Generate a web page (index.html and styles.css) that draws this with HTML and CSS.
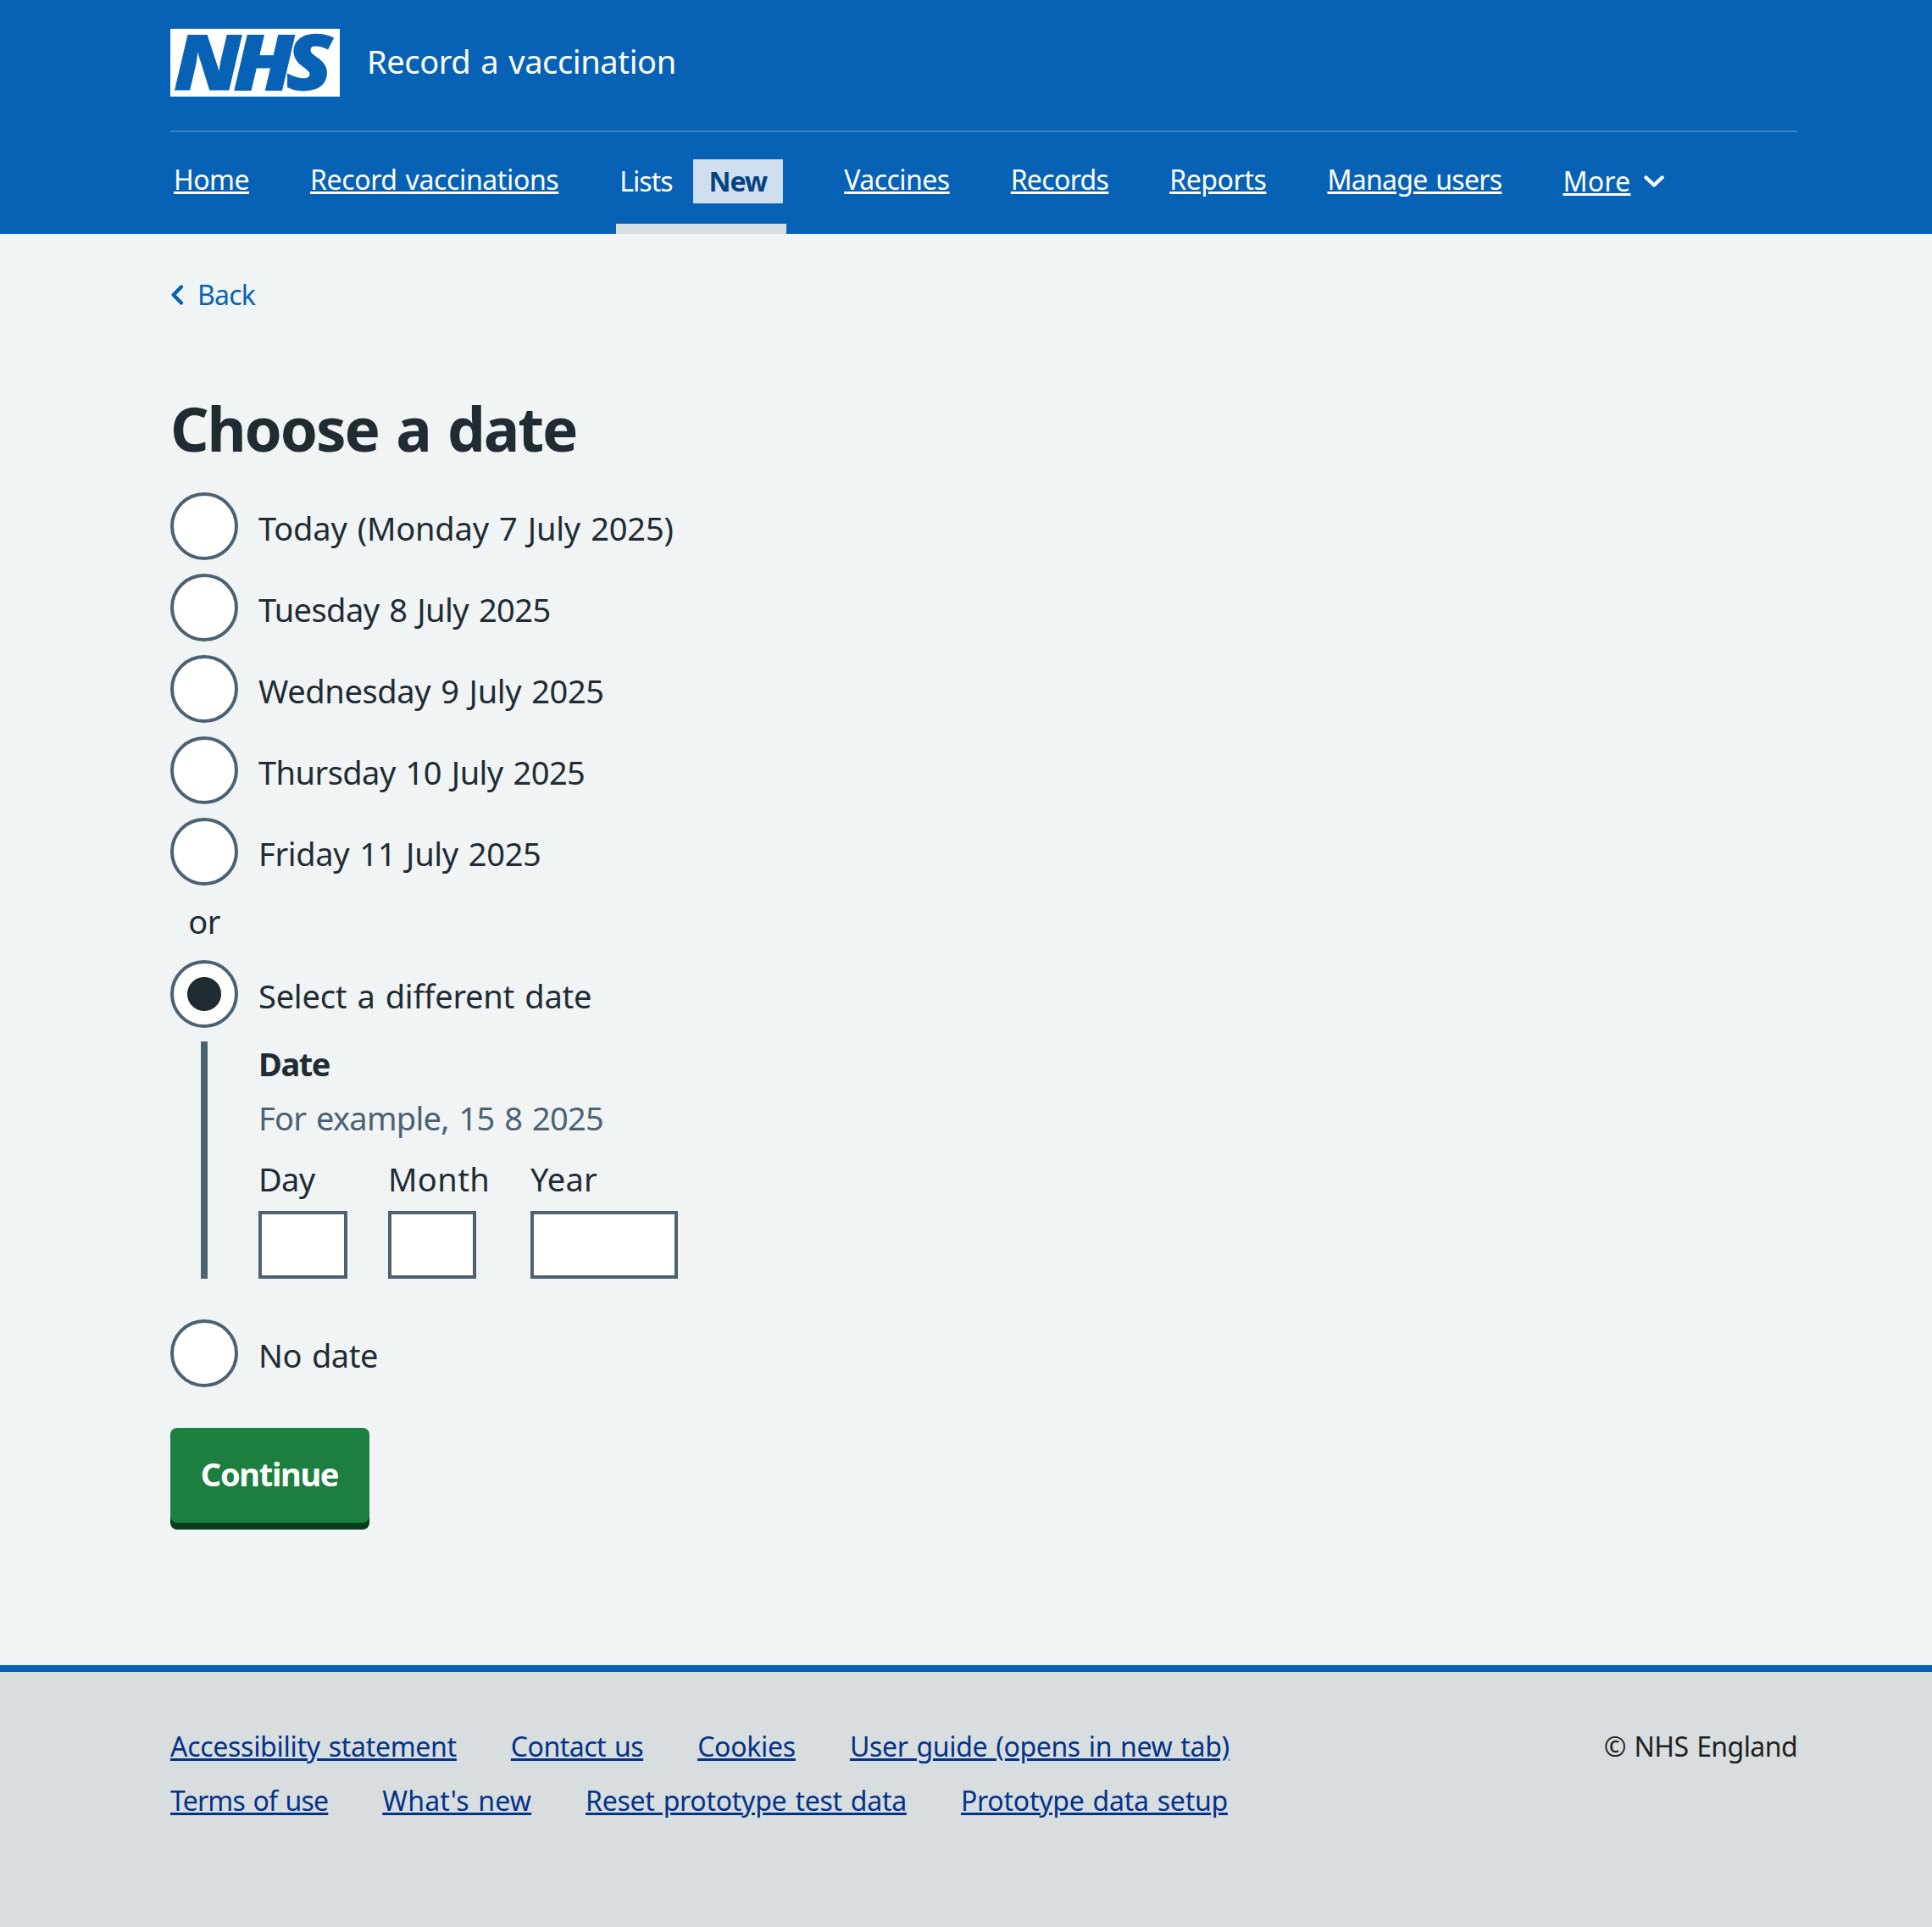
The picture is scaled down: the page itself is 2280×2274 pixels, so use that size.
FILE: index.html
```
<!DOCTYPE html>
<html lang="en">
<head>
<meta charset="utf-8">
<title>Choose a date - Record a vaccination</title>
<link rel="stylesheet" href="styles.css">
</head>
<body>
<header class="header">
  <div class="container">
    <div class="header-top">
      <svg class="logo" viewBox="0 0 200 80" role="img" aria-label="NHS">
        <rect width="200" height="80" fill="#fff"/>
        <text class="logo-text" transform="scale(1.11 1)" x="3.6 66.8 122.8" y="72.3">NHS</text>
      </svg>
      <span class="service-name">Record a vaccination</span>
    </div>
    <nav>
      <ul class="nav">
        <li><a class="nav-link nav-home" href="#">Home</a></li>
        <li><a class="nav-link nav-record" href="#">Record vaccinations</a></li>
        <li class="nav-current"><a class="nav-lists" href="#">Lists</a><strong class="tag">New</strong></li>
        <li><a class="nav-link nav-vaccines" href="#">Vaccines</a></li>
        <li><a class="nav-link nav-records" href="#">Records</a></li>
        <li><a class="nav-link nav-reports" href="#">Reports</a></li>
        <li><a class="nav-link nav-users" href="#">Manage users</a></li>
        <li class="nav-more"><a class="nav-link" href="#">More</a><svg class="chevron" viewBox="0 0 24 14"><path d="M2.5 2.5 12 11.5 21.5 2.5"/></svg></li>
      </ul>
    </nav>
  </div>
</header>

<main class="main container">
  <a class="back" href="#"><svg class="back-icon" viewBox="0 0 14 24"><path d="M12 2.5 2.7 12 12 21.5"/></svg>Back</a>
  <h1>Choose a date</h1>
  <form>
    <div class="radios">
      <label class="radio"><span class="dot"></span><span class="label-today">Today (Monday 7 July 2025)</span></label>
      <label class="radio"><span class="dot"></span><span class="label-tue">Tuesday 8 July 2025</span></label>
      <label class="radio"><span class="dot"></span><span class="label-wed">Wednesday 9 July 2025</span></label>
      <label class="radio"><span class="dot"></span><span class="label-thu">Thursday 10 July 2025</span></label>
      <label class="radio"><span class="dot"></span><span class="label-fri">Friday 11 July 2025</span></label>
    </div>
    <div class="divider">or</div>
    <label class="radio"><span class="dot dot-on"></span><span class="label-select">Select a different date</span></label>
    <fieldset class="conditional">
      <div class="legend">Date</div>
      <div class="hint">For example, 15 8 2025</div>
      <div class="date">
        <label class="day">Day<input type="text"></label>
        <label class="month">Month<input type="text"></label>
        <label class="year">Year<input type="text"></label>
      </div>
    </fieldset>
    <label class="radio"><span class="dot"></span><span class="label-none">No date</span></label>
    <button class="button" type="button">Continue</button>
  </form>
</main>

<footer class="footer">
  <div class="container footer-row">
    <ul class="footer-links">
      <li><a class="f-access" href="#">Accessibility statement</a></li>
      <li><a class="f-contact" href="#">Contact us</a></li>
      <li><a class="f-cookies" href="#">Cookies</a></li>
      <li><a class="f-guide" href="#">User guide (opens in new tab)</a></li>
      <li><a class="f-terms" href="#">Terms of use</a></li>
      <li><a class="f-news" href="#">What's new</a></li>
      <li><a class="f-reset" href="#">Reset prototype test data</a></li>
      <li><a class="f-setup" href="#">Prototype data setup</a></li>
    </ul>
    <p class="copyright">© NHS England</p>
  </div>
</footer>
</body>
</html>
```
FILE: styles.css
```
* { box-sizing: border-box; }

body {
  margin: 0;
  background: #f0f4f5;
  color: #212b32;
  font: 38px/56px "Noto Sans", "Open Sans", sans-serif;
  word-spacing: 2.5px;
}

ul { list-style: none; margin: 0; padding: 0; }

a {
  color: inherit;
  text-decoration-thickness: 3px;
  text-underline-offset: 2px;
}

.container { width: 1920px; margin-left: 201px; }

/* Header */
.header { height: 276px; background: #0762b6; color: #fff; }
.header-top {
  display: flex;
  align-items: center;
  gap: 32px;
  height: 156px;
  padding: 34px 0 40px;
  border-bottom: 2px solid #3981c5;
}
.logo { display: block; width: 200px; height: 80px; overflow: visible; }
.logo-text {
  fill: #0762b6;
  stroke: #0762b6;
  stroke-width: 0.8;
  font: italic 900 91px "Noto Sans", sans-serif;
}
.service-name { padding-bottom: 4px; letter-spacing: -0.38px; }

.nav { display: flex; gap: 64px; height: 120px; font-size: 32px; word-spacing: 2px; }
.nav li { padding: 28px 4px 0; }
.nav-link { display: block; }
.nav-home { letter-spacing: -0.51px; }
.nav-record { letter-spacing: -0.38px; }
.nav-vaccines { letter-spacing: -0.53px; }
.nav-records { letter-spacing: -0.67px; }
.nav-reports { letter-spacing: -0.41px; }
.nav-users { letter-spacing: -0.71px; }
.nav .nav-current {
  display: flex;
  justify-content: space-between;
  width: 201px;
  padding-top: 30px;
  border-bottom: 12px solid #d8dde0;
}
.nav-lists { text-decoration: none; letter-spacing: -0.95px; }
.tag {
  width: 106px;
  height: 52px;
  margin-top: 2px;
  padding-right: 1px;
  background: #cfdff0;
  color: #054380;
  font-weight: 680;
  line-height: 52px;
  letter-spacing: -1.2px;
  text-align: center;
}
.nav .nav-more { display: flex; gap: 16px; padding-top: 30px; letter-spacing: 0.25px; }
.chevron { width: 24px; height: 14px; margin-top: 21px; }
.chevron path, .back-icon path {
  fill: none;
  stroke: currentColor;
  stroke-width: 4.4;
  stroke-linecap: round;
  stroke-linejoin: round;
}

/* Page content */
.main { height: 1689px; padding-top: 48px; }
.back {
  display: flex;
  align-items: center;
  gap: 17px;
  height: 48px;
  padding-left: 1px;
  color: #0762b6;
  font-size: 32px;
  line-height: 48px;
  letter-spacing: -0.8px;
  text-decoration: none;
}
.back-icon { width: 14px; height: 24px; }

h1 {
  margin: 94px 0 35px;
  font-size: 71px;
  font-weight: 680;
  line-height: 80px;
  letter-spacing: -2.1px;
  word-spacing: 4px;
}

.radios { display: grid; gap: 16px; }
.radio { display: flex; gap: 24px; height: 80px; line-height: 84px; }
.dot {
  width: 80px;
  height: 80px;
  background: #fff;
  border: 4px solid #4c6272;
  border-radius: 50%;
}
.dot-on { background: radial-gradient(circle, #212b32 19.5px, #fff 20.5px); }
.label-today { letter-spacing: -0.19px; }
.label-tue { letter-spacing: -0.56px; }
.label-wed { letter-spacing: -0.37px; }
.label-thu { letter-spacing: -0.54px; }
.label-fri { letter-spacing: -0.34px; }
.label-select { letter-spacing: -0.21px; }
.label-none { letter-spacing: -0.45px; }
.divider { width: 80px; margin: 14px 0 18px; text-align: center; letter-spacing: -0.5px; }

.conditional {
  margin: 16px 0 48px 36px;
  padding: 0 0 0 60px;
  border: 0;
  border-left: 8px solid #4c6272;
}
.legend { font-weight: 690; line-height: 52px; letter-spacing: -1.4px; }
.hint { margin: 10px 0 16px; color: #4c6272; letter-spacing: -0.7px; }
.date { display: flex; gap: 48px; }
.date label { display: block; }
.date input {
  display: block;
  width: 100%;
  height: 80px;
  margin-top: 10px;
  padding: 0;
  background: #fff;
  border: 4px solid #4c6272;
  border-radius: 0;
}
.day { width: 105px; letter-spacing: -0.7px; }
.month { width: 120px; letter-spacing: 0.4px; }
.date .month input { width: 104px; }
.year { width: 174px; letter-spacing: 0.2px; }

.button {
  display: block;
  width: 235px;
  height: 112px;
  margin-top: 48px;
  padding: 0 1px 4px 0;
  background: #1c7f3f;
  border: 0;
  border-radius: 8px;
  box-shadow: 0 8px 0 #083d1e;
  color: #fff;
  font: 690 38px/108px "Noto Sans", "Open Sans", sans-serif;
  letter-spacing: -1.3px;
}

/* Footer */
.footer {
  height: 309px;
  padding-top: 56px;
  background: #d8dde0;
  border-top: 8px solid #0762b6;
  font-size: 32px;
  line-height: 64px;
  word-spacing: 2px;
}
.footer-row { display: flex; justify-content: space-between; }
.footer-links { display: flex; flex-wrap: wrap; gap: 0 64px; width: 1300px; color: #043286; }
.f-access { letter-spacing: -0.29px; }
.f-contact { letter-spacing: -0.49px; }
.f-cookies { letter-spacing: -0.27px; }
.f-guide { letter-spacing: -0.35px; }
.f-terms { letter-spacing: -0.83px; }
.f-news { letter-spacing: 0.19px; }
.f-reset { letter-spacing: -0.27px; }
.f-setup { letter-spacing: -0.25px; }
.copyright { margin: 0; color: #231f20; letter-spacing: -0.58px; }
```
